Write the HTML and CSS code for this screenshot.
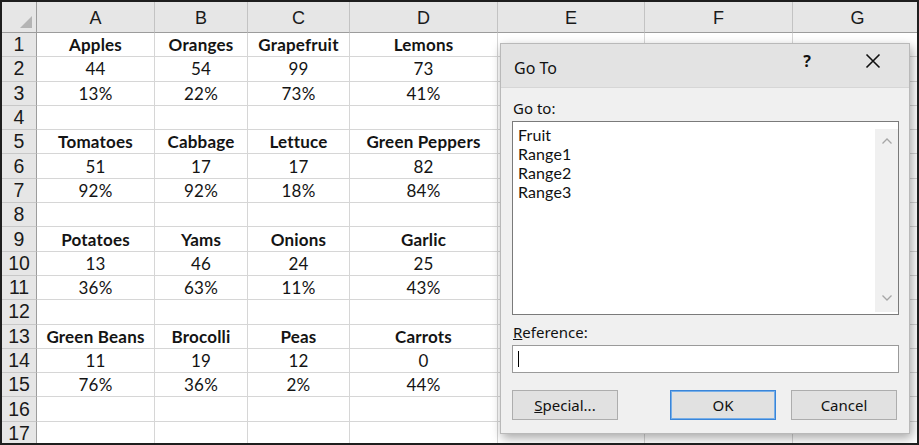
FILE: index.html
```html
<!DOCTYPE html>
<html>
<head>
<meta charset="utf-8">
<link rel="stylesheet" href="styles.css">
</head>
<body>
<div class="frame">
  <div class="sheet">
    <div class="corner"><span class="tri"></span></div>
    <div class="colh">A</div><div class="colh">B</div><div class="colh">C</div><div class="colh">D</div><div class="colh">E</div><div class="colh">F</div><div class="colh">G</div>

    <div class="rowh">1</div><div class="c b">Apples</div><div class="c b">Oranges</div><div class="c b">Grapefruit</div><div class="c b">Lemons</div><div class="c"></div><div class="c"></div><div class="c"></div>
    <div class="rowh">2</div><div class="c">44</div><div class="c">54</div><div class="c">99</div><div class="c">73</div><div class="c"></div><div class="c"></div><div class="c"></div>
    <div class="rowh">3</div><div class="c">13%</div><div class="c">22%</div><div class="c">73%</div><div class="c">41%</div><div class="c"></div><div class="c"></div><div class="c"></div>
    <div class="rowh">4</div><div class="c"></div><div class="c"></div><div class="c"></div><div class="c"></div><div class="c"></div><div class="c"></div><div class="c"></div>
    <div class="rowh">5</div><div class="c b">Tomatoes</div><div class="c b">Cabbage</div><div class="c b">Lettuce</div><div class="c b">Green Peppers</div><div class="c"></div><div class="c"></div><div class="c"></div>
    <div class="rowh">6</div><div class="c">51</div><div class="c">17</div><div class="c">17</div><div class="c">82</div><div class="c"></div><div class="c"></div><div class="c"></div>
    <div class="rowh">7</div><div class="c">92%</div><div class="c">92%</div><div class="c">18%</div><div class="c">84%</div><div class="c"></div><div class="c"></div><div class="c"></div>
    <div class="rowh">8</div><div class="c"></div><div class="c"></div><div class="c"></div><div class="c"></div><div class="c"></div><div class="c"></div><div class="c"></div>
    <div class="rowh">9</div><div class="c b">Potatoes</div><div class="c b">Yams</div><div class="c b">Onions</div><div class="c b">Garlic</div><div class="c"></div><div class="c"></div><div class="c"></div>
    <div class="rowh">10</div><div class="c">13</div><div class="c">46</div><div class="c">24</div><div class="c">25</div><div class="c"></div><div class="c"></div><div class="c"></div>
    <div class="rowh">11</div><div class="c">36%</div><div class="c">63%</div><div class="c">11%</div><div class="c">43%</div><div class="c"></div><div class="c"></div><div class="c"></div>
    <div class="rowh">12</div><div class="c"></div><div class="c"></div><div class="c"></div><div class="c"></div><div class="c"></div><div class="c"></div><div class="c"></div>
    <div class="rowh">13</div><div class="c b">Green Beans</div><div class="c b">Brocolli</div><div class="c b">Peas</div><div class="c b">Carrots</div><div class="c"></div><div class="c"></div><div class="c"></div>
    <div class="rowh">14</div><div class="c">11</div><div class="c">19</div><div class="c">12</div><div class="c">0</div><div class="c"></div><div class="c"></div><div class="c"></div>
    <div class="rowh">15</div><div class="c">76%</div><div class="c">36%</div><div class="c">2%</div><div class="c">44%</div><div class="c"></div><div class="c"></div><div class="c"></div>
    <div class="rowh">16</div><div class="c"></div><div class="c"></div><div class="c"></div><div class="c"></div><div class="c"></div><div class="c"></div><div class="c"></div>
    <div class="rowh">17</div><div class="c"></div><div class="c"></div><div class="c"></div><div class="c"></div><div class="c"></div><div class="c"></div><div class="c"></div>
  </div>

  <div class="dialog">
    <div class="titlebar">
      <span class="title">Go To</span>
      <span class="help">?</span>
      <svg class="close" width="16" height="16" viewBox="0 0 16 16"><path d="M1.5 1.5 L14.5 14.5 M14.5 1.5 L1.5 14.5" stroke="#111" stroke-width="1.6" fill="none"/></svg>
    </div>
    <div class="dbody">
      <div class="label">Go to:</div>
      <div class="listbox">
        <div class="items">
          <div class="item">Fruit</div>
          <div class="item">Range1</div>
          <div class="item">Range2</div>
          <div class="item">Range3</div>
        </div>
        <div class="scroll">
          <svg width="12" height="8" viewBox="0 0 12 8"><path d="M1.5 6.5 L6 2 L10.5 6.5" stroke="#a6a6a6" stroke-width="1.3" fill="none"/></svg>
          <svg width="12" height="8" viewBox="0 0 12 8"><path d="M1.5 1.5 L6 6 L10.5 1.5" stroke="#a6a6a6" stroke-width="1.3" fill="none"/></svg>
        </div>
      </div>
      <div class="label ref"><u>R</u>eference:</div>
      <div class="input"><span class="caret"></span></div>
      <div class="buttons">
        <div class="btn"><u>S</u>pecial...</div>
        <div class="spacer"></div>
        <div class="btn ok">OK</div>
        <div class="btn">Cancel</div>
      </div>
    </div>
  </div>
</div>
</body>
</html>
```

FILE: styles.css
```css
html, body {
  margin: 0;
  padding: 0;
  background: #ffffff;
}
.frame {
  position: relative;
  width: 919px;
  height: 445px;
  box-sizing: border-box;
  border: 2px solid #1e1e1e;
  overflow: hidden;
  background: #fff;
}
.sheet {
  display: grid;
  grid-template-columns: 35px 118px 93px 102px 148px 147px 148px 130px;
  grid-template-rows: 31px;
  grid-auto-rows: 24.3px;
}
.corner {
  background: #e6e6e6;
  border-right: 1px solid #9c9c9c;
  border-bottom: 1px solid #9c9c9c;
  position: relative;
}
.tri {
  position: absolute;
  right: 4px;
  bottom: 4px;
  width: 0;
  height: 0;
  border-left: 12px solid transparent;
  border-bottom: 12px solid #b4b4b4;
}
.colh {
  background: #e6e6e6;
  border-right: 1px solid #c3c3c3;
  border-bottom: 1px solid #9c9c9c;
  display: flex;
  align-items: center;
  justify-content: center;
  font-family: "Liberation Sans", Arial, sans-serif;
  font-size: 18px;
  color: #1a1a1a;
  padding-top: 2px;
}
.rowh {
  background: #e6e6e6;
  border-right: 1px solid #9c9c9c;
  border-bottom: 1px solid #c8c8c8;
  display: flex;
  align-items: center;
  justify-content: center;
  font-family: "Liberation Sans", Arial, sans-serif;
  font-size: 19.5px;
  color: #1a1a1a;
}
.c {
  border-right: 1px solid #d6d6d6;
  border-bottom: 1px solid #d6d6d6;
  display: flex;
  align-items: center;
  justify-content: center;
  font-family: "Lato", "Open Sans", sans-serif;
  font-size: 17px;
  letter-spacing: 0.2px;
  color: #141414;
}
.c.b {
  font-weight: 700;
}

/* dialog */
.dialog {
  position: absolute;
  left: 498px;
  top: 41px;
  width: 408px;
  height: 389px;
  background: #f0f0f0;
  border: 1px solid #b9b9b9;
  box-shadow: 2px 4px 10px rgba(0,0,0,0.35);
  display: flex;
  flex-direction: column;
  font-family: "Noto Sans", "Open Sans", sans-serif;
  color: #111;
}
.titlebar {
  height: 44px;
  background: #e3e3e3;
  border-bottom: 1px solid #d6d6d6;
  display: flex;
  align-items: center;
  padding: 0 28px 0 13px;
  box-sizing: border-box;
}
.title {
  font-size: 16px;
  margin-top: 4px;
  flex: 1;
}
.help {
  font-size: 16px;
  font-weight: 700;
  margin-right: 54px;
  margin-top: -10px;
}
.close {
  margin-top: -10px;
}
.dbody {
  padding: 10px 10px 0 11px;
  display: flex;
  flex-direction: column;
}
.label {
  font-size: 15px;
  line-height: 20px;
  margin-left: 1px;
  height: 23px;
}
.listbox {
  height: 194px;
  box-sizing: border-box;
  border: 1px solid #7a7a7a;
  background: #fff;
  display: flex;
}
.items {
  flex: 1;
  padding: 3px 0 0 5px;
}
.item {
  font-family: "Lato", "Noto Sans", sans-serif;
  font-size: 16px;
  line-height: 19px;
  height: 19px;
  letter-spacing: 0.1px;
}
.scroll {
  width: 23px;
  margin: 7px 0 2px 0;
  background: #f0f0f0;
  display: flex;
  flex-direction: column;
  justify-content: space-between;
  align-items: center;
  padding: 8px 0 10px;
  box-sizing: border-box;
}
.ref {
  margin-top: 7px;
}
.input {
  height: 28px;
  box-sizing: border-box;
  border: 1px solid #9a9a9a;
  background: #fff;
  display: flex;
  align-items: center;
  padding-left: 5px;
}
.caret {
  width: 1px;
  height: 16px;
  background: #000;
}
.buttons {
  display: flex;
  margin-top: 17px;
  gap: 15px;
}
.spacer {
  width: 37px;
}
.btn {
  width: 106px;
  height: 30px;
  box-sizing: border-box;
  border: 1px solid #adadad;
  background: #e1e1e1;
  display: flex;
  align-items: center;
  justify-content: center;
  font-size: 15px;
}
.spacer + .btn {
  margin-left: -15px;
}
.btn.ok {
  border: 1px solid #3a85d8;
  box-shadow: inset 0 0 0 1px #76aee8;
}
```
